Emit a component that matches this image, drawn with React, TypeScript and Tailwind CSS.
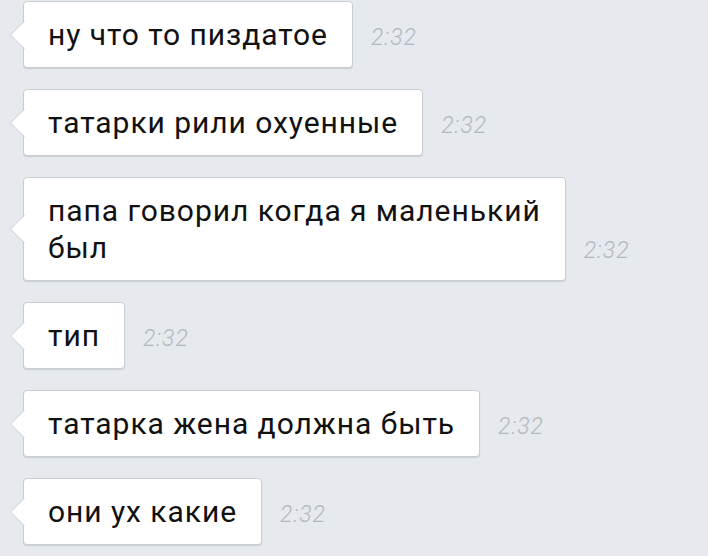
const messages = [
  { text: "ну что то пиздатое", time: "2:32" },
  { text: "татарки рили охуенные", time: "2:32" },
  { text: "папа говорил когда я маленький\nбыл", time: "2:32" },
  { text: "тип", time: "2:32" },
  { text: "татарка жена должна быть", time: "2:32" },
  { text: "они ух какие", time: "2:32" },
];

function Bubble({ text, time }: { text: string; time: string }) {
  return (
    <div className="flex items-end">
      <div className="relative ml-[23px] rounded-[4px] border border-[#c9ced4] bg-white px-[24px] py-[14px] shadow-[0_1px_1px_rgba(0,0,0,0.12)]">
        <svg
          className="absolute left-[-15px] top-1/2 -translate-y-1/2"
          width="16"
          height="30"
          viewBox="0 0 16 30"
        >
          <path d="M16 1 L1.5 15 L16 29 Z" fill="#ffffff" />
          <path d="M15.5 1 L1.5 15 L15.5 29" fill="none" stroke="#c9ced4" strokeWidth="1" />
        </svg>
        <p className="whitespace-pre-line text-[30px] leading-[37px] tracking-[0.95px] text-[#111]">{text}</p>
      </div>
      <span className="mb-[15px] ml-[18px] text-[23px] leading-[30px] font-light italic tracking-[1px] text-[#b3b8be]">
        {time}
      </span>
    </div>
  );
}

export default function App() {
  return (
    <div
      className="flex h-[556px] w-[708px] flex-col gap-[21px] overflow-hidden bg-[#e6e9ed] pt-[1px]"
      style={{ fontFamily: "Roboto, 'Noto Sans', sans-serif" }}
    >
      {messages.map((m, i) => (
        <Bubble key={i} text={m.text} time={m.time} />
      ))}
    </div>
  );
}
